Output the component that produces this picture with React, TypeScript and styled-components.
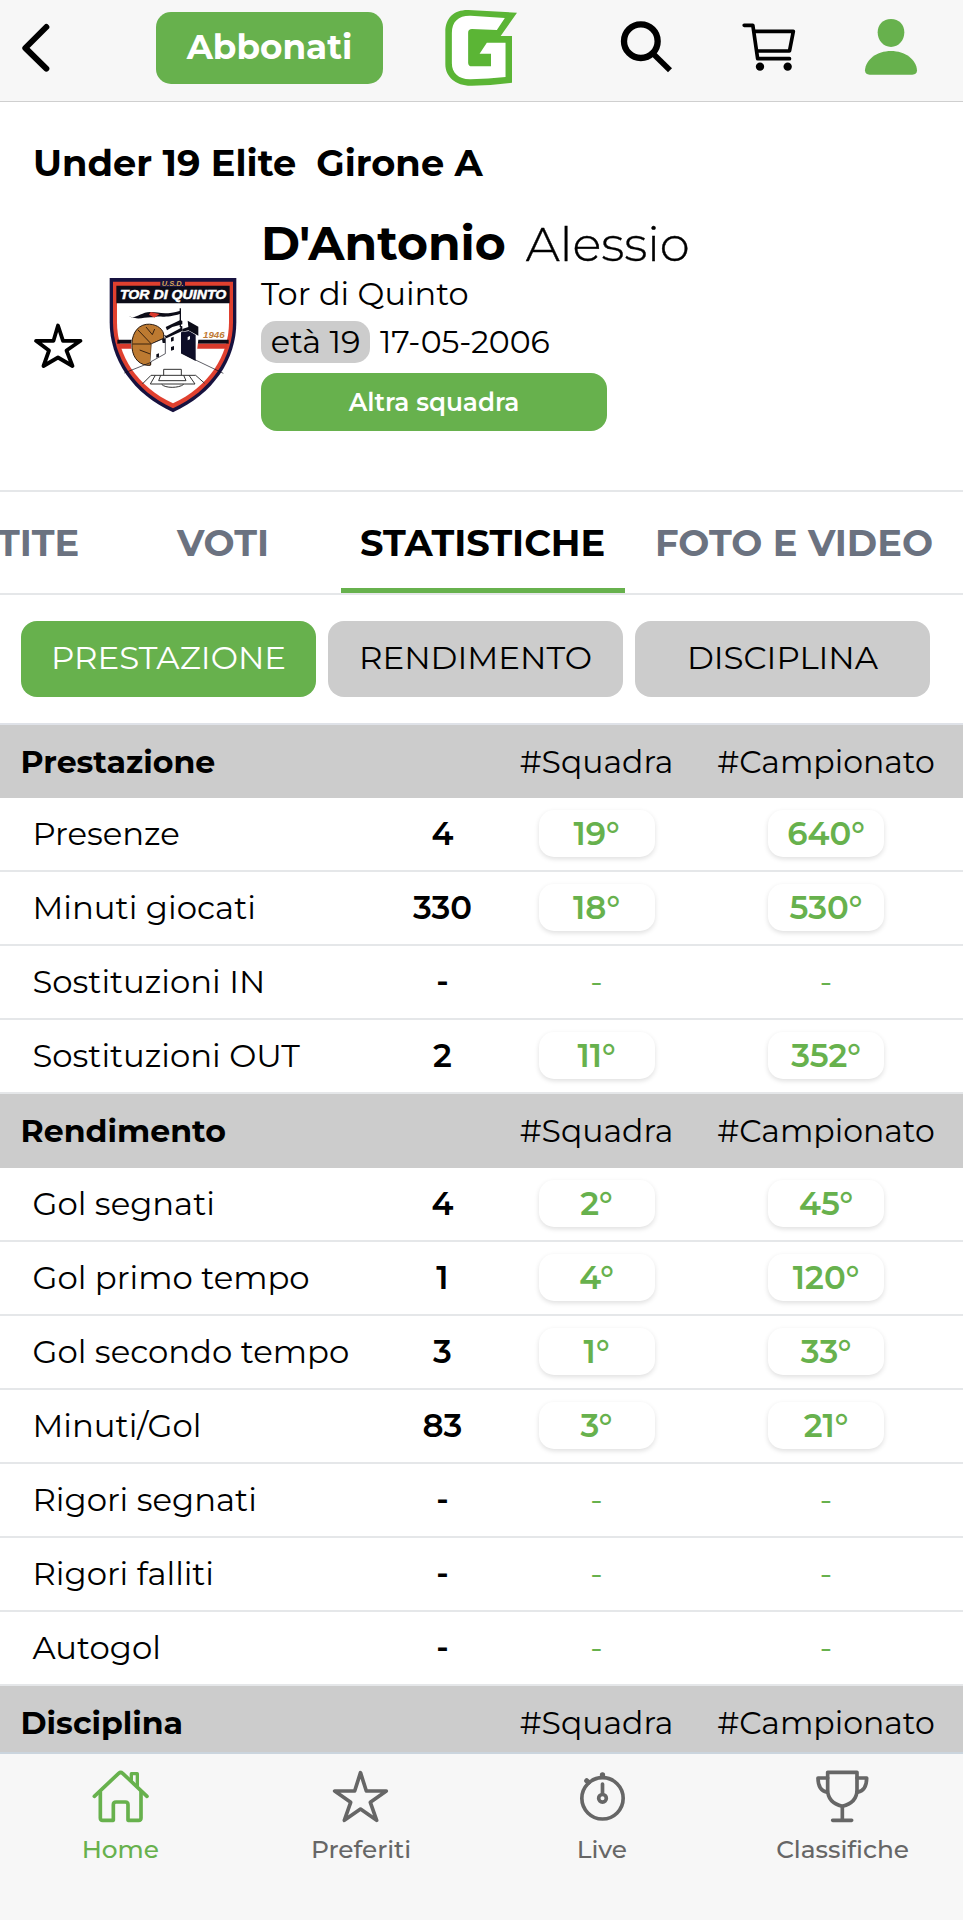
import React from 'react';
import styled, { createGlobalStyle } from 'styled-components';

const green = '#67b14d';
const grey = '#cccccc';
const line = '#e5e7e9';

const GlobalStyle = createGlobalStyle`
  * { box-sizing: border-box; }
  body {
    margin: 0;
    background: #fff;
    color: #000;
    font-family: Montserrat, Inter, "Open Sans", sans-serif;
  }
  button { font-family: inherit; border: 0; padding: 0; color: inherit; }
  svg { display: block; flex: none; }
`;

const Screen = styled.div`
  width: 963px;
  height: 1920px;
  overflow: hidden;
  display: flex;
  flex-direction: column;
`;

const Label = styled.span<{ $size?: number; $weight?: number }>`
  display: inline-block;
  white-space: nowrap;
  font-size: ${p => p.$size ?? 32.3}px;
  font-weight: ${p => p.$weight ?? 400};
`;

/* top bar */
const TopBar = styled.header`
  display: flex;
  align-items: flex-start;
  flex: none;
  height: 102px;
  padding-left: 18px;
  background: #f7f7f7;
  border-bottom: 1px solid #cfcfcf;
`;
const BarIcon = styled.svg<{ $left?: number; $top: number }>`
  margin-left: ${p => p.$left ?? 0}px;
  margin-top: ${p => p.$top}px;
`;
const SubscribeButton = styled.button`
  width: 227px;
  height: 72px;
  margin: 12px 0 0 102px;
  border-radius: 15px;
  background: ${green};
  color: #fff;
  line-height: 71px;
`;

/* player card */
const Main = styled.main`
  flex: 1;
  min-height: 0;
  overflow: hidden;
`;
const Player = styled.section`
  height: 390px;
  padding: 40px 0 0 33px;
  border-bottom: 2px solid ${line};
`;
const League = styled.h1`
  display: flex;
  gap: 20px;
  margin: 0 0 32px;
  height: 42px;
  line-height: 42px;
  font-size: inherit;
`;
const PlayerRow = styled.div`
  display: flex;
  align-items: flex-start;
`;
const StarIcon = styled.svg`
  margin-top: 104px;
`;
const Crest = styled.svg`
  margin: 61px 0 0 26px;
`;
const Info = styled.div`
  display: flex;
  flex-direction: column;
  align-items: flex-start;
  margin-left: 24px;
`;
const PlayerName = styled.h2`
  display: flex;
  gap: 20px;
  margin: 0;
  height: 56px;
  line-height: 55px;
`;
const FirstName = styled(Label)`
  -webkit-text-stroke: 0.4px currentColor;
`;
const Club = styled.div`
  margin-top: 1px;
  height: 42px;
  line-height: 42px;
`;
const Birth = styled.div`
  display: flex;
  margin-top: 6px;
  gap: 10px;
  line-height: 42px;
`;
const AgePill = styled.div`
  width: 109px;
  height: 42px;
  border-radius: 15px;
  background: ${grey};
  text-align: center;
`;
const TeamButton = styled.button`
  width: 346px;
  height: 58px;
  margin-top: 10px;
  border-radius: 16px;
  background: ${green};
  color: #fff;
  line-height: 58px;
`;

/* tabs */
const Tabs = styled.nav`
  display: flex;
  height: 103px;
  border-bottom: 2px solid ${line};
`;
const Tab = styled.a<{ $active?: boolean; $width: number; $offset: number }>`
  flex: none;
  width: ${p => p.$width}px;
  height: 101px;
  line-height: 102px;
  color: ${p => (p.$active ? '#000' : '#6b7280')};
  box-shadow: ${p => (p.$active ? `inset 0 -5px 0 ${green}` : 'none')};
  & > span { margin-left: ${p => p.$offset}px; }
`;
const Filters = styled.div`
  display: flex;
  gap: 12px;
  padding: 26px 33px 26px 21px;
`;
const Filter = styled.button<{ $active?: boolean }>`
  flex: 1;
  height: 76px;
  border-radius: 16px;
  line-height: 74px;
  background: ${p => (p.$active ? green : grey)};
  color: ${p => (p.$active ? '#fff' : '#000')};
`;

/* statistics table */
const Stats = styled.div`
  border-top: 2px solid #dfe2e8;
`;
const StatGrid = styled.div`
  display: grid;
  grid-template-columns: 400px 85px 223px 236px;
  align-items: center;
  justify-items: center;
  & > :first-child { justify-self: start; }
`;
const GroupHead = styled(StatGrid)<{ $height: number }>`
  height: ${p => p.$height}px;
  padding-bottom: ${p => p.$height - 73}px;
  background: ${grey};
  & > :first-child { margin-left: 20.5px; }
`;
const StatRow = styled(StatGrid)`
  height: 74px;
  padding-bottom: 2px;
  border-bottom: 2px solid ${line};
  & > :first-child { margin-left: 32.5px; }
`;
const Rank = styled.div<{ $empty: boolean }>`
  width: 116px;
  height: 47px;
  line-height: 47px;
  border-radius: 15px;
  text-align: center;
  color: ${green};
  box-shadow: ${p => (p.$empty ? 'none' : '0 2px 5px rgba(0, 0, 0, 0.13)')};
`;

/* bottom navigation */
const BottomNav = styled.nav`
  display: flex;
  flex: none;
  height: 168px;
  border-top: 2px solid #cbd5de;
  background: #f7f7f7;
`;
const NavItem = styled.a<{ $active?: boolean }>`
  flex: 1;
  display: flex;
  flex-direction: column;
  align-items: center;
  padding-top: 12px;
  color: ${p => (p.$active ? green : '#666')};
  line-height: 30px;
  & > span { margin-top: 8px; }
`;

type Stat = [name: string, value: string, team: string, league: string];

const performance: Stat[] = [
  ['Presenze', '4', '19°', '640°'],
  ['Minuti giocati', '330', '18°', '530°'],
  ['Sostituzioni IN', '-', '-', '-'],
  ['Sostituzioni OUT', '2', '11°', '352°'],
];
const scoring: Stat[] = [
  ['Gol segnati', '4', '2°', '45°'],
  ['Gol primo tempo', '1', '4°', '120°'],
  ['Gol secondo tempo', '3', '1°', '33°'],
  ['Minuti/Gol', '83', '3°', '21°'],
  ['Rigori segnati', '-', '-', '-'],
  ['Rigori falliti', '-', '-', '-'],
  ['Autogol', '-', '-', '-'],
];

function Head({ title, height = 74 }: { title: string; height?: number }) {
  return (
    <GroupHead $height={height}>
      <Label $size={31.6} $weight={700}>{title}</Label>
      <span />
      <Label $size={31.5}>#Squadra</Label>
      <Label $size={31.5}>#Campionato</Label>
    </GroupHead>
  );
}

function RankCell({ value }: { value: string }) {
  const empty = value === '-';
  return (
    <Rank $empty={empty}>
      <Label $weight={empty ? 400 : 600}>{value}</Label>
    </Rank>
  );
}

function Rows({ stats }: { stats: Stat[] }) {
  return (
    <>
      {stats.map(([name, value, team, league]) => (
        <StatRow key={name}>
          <Label>{name}</Label>
          <Label $weight={600}>{value}</Label>
          <RankCell value={team} />
          <RankCell value={league} />
        </StatRow>
      ))}
    </>
  );
}

function ClubCrest() {
  return (
    <Crest width="128" height="136" viewBox="26 34 384 408">
      <path d="M28 37H408V170C408 280 340 385 218 440C96 385 28 280 28 170Z" fill="#17123f" />
      <path d="M38 48H398V170C398 274 333 376 218 428C103 376 38 274 38 170Z" fill="#e0402f" />
      <path d="M50 62H386V170C386 268 326 364 218 413C110 364 50 268 50 170Z" fill="#fff" />
      <path d="M48 60H388V113H48Z" fill="#0c0c18" />
      <path d="M180 44H254V64H180Z" fill="#17123f" />
      <path d="M51 222H385V234H51Z" fill="#0c0c18" />
      <path d="M53 234H383L380 249H56Z" fill="#d63a2c" />
      <path d="M160 214L216 184L290 178V222V270L284 262L150 290Z" fill="#fff" />
      <circle cx="142" cy="237" r="50" fill="#fff" />
      <path d="M190 205C186 186 163 173 138 176C108 180 92 210 95 246C98 280 120 301 150 299L153 266L166 262L160 234L190 224Z" fill="#bd7a31" stroke="#2a1a10" strokeWidth="3" />
      <path d="M113 193L153 235H96M153 235L190 218M153 235L151 298M137 184L156 207L163 190M118 253L150 265" fill="none" stroke="#3a220f" strokeWidth="3" />
      <path d="M84 152C108 162 122 138 151 139C172 138 191 150 240 135V144C197 159 176 149 158 155C128 153 119 165 84 152Z" fill="#0c0c18" />
      <path d="M151 139L178 145L162 156L146 147Z" fill="#d9382c" />
      <path d="M198 190L240 166L294 184V222L286 290L242 264L150 290L154 234L198 216Z" fill="#fff" />
      <path d="M240 128V184" stroke="#0c0c18" strokeWidth="4" />
      <path d="M196 184L240 163L246 166V176L216 184L200 194ZM198 210L240 188V180L246 182V196L198 218L190 208Z" fill="#0c0c18" />
      <path d="M262 165L294 183V210L286 206L264 194L246 198V190L264 184Z" fill="#0c0c18" />
      <path d="M242 200L266 196L286 208V286L242 263Z" fill="#0e0e28" />
      <path d="M154 234L195 216V264L152 288" fill="none" stroke="#0c0c18" strokeWidth="2" />
      <path d="M185 221L195 218V232H187ZM212 216L220 213V225L212 228ZM212 244L221 241V252L212 255ZM168 266L176 263V273L168 276Z" fill="#0c0c18" />
      <path d="M262 214L269 211V221L262 224Z" fill="#fff" />
      <path d="M242 262L369 323M152 290L72 322" stroke="#0c0c18" strokeWidth="2" fill="none" />
      <g fill="none" stroke="#333" strokeWidth="3">
        <path d="M126 355L152 329H286L313 353M190 329V311H243V329M165 329L150 355H284L266 329M181 329L175 345H257L250 329" />
        <path d="M184 356C194 368 236 368 250 356" />
      </g>
      <text x="217" y="61" fontSize="20" fontWeight="700" fontStyle="italic" fill="#d9a85a" textAnchor="middle" textLength="66" lengthAdjust="spacingAndGlyphs" fontFamily="Liberation Sans, sans-serif">U.S.D.</text>
      <text x="59" y="101" fontSize="38" fontWeight="700" fontStyle="italic" fill="#fff" stroke="#fff" strokeWidth="1.5" textLength="319" lengthAdjust="spacingAndGlyphs" fontFamily="Liberation Sans, sans-serif">TOR DI QUINTO</text>
      <text x="308" y="216" fontSize="25" fontWeight="700" fontStyle="italic" fill="#c07a35" textLength="65" lengthAdjust="spacingAndGlyphs" fontFamily="Liberation Sans, sans-serif">1946</text>
    </Crest>
  );
}

export default function App() {
  return (
    <Screen>
      <GlobalStyle />
      <TopBar>
        <BarIcon $top={18} width="36" height="60" viewBox="54 54 108 180">
          <path d="M139 81L76 144L139 206" fill="none" stroke="#000" strokeWidth="18" strokeLinecap="round" strokeLinejoin="round" />
        </BarIcon>
        <SubscribeButton>
          <Label $size={34.2} $weight={700}>Abbonati</Label>
        </SubscribeButton>
        <BarIcon $left={58} $top={6} width="81" height="84" viewBox="63 18 243 252">
          <path d="M145 30L291 38L242 108H276V248Q213 256 156 257.500C109 259 76 232 76 193V95C76 54 102 29 145 30Z" fill="#5bb535" />
          <path d="M152 47L254.500 54L230.600 90L156 87Q144.400 87 144.400 98V188Q144.400 199 156 199H213V161H178.700L200.500 128H256.600V231Q205 237 152 238C116 239 95.600 219 95.600 190V99C95.600 64 116 46 152 47Z" fill="#fff" />
        </BarIcon>
        <BarIcon $left={94} $top={18} width="60" height="60" viewBox="588 54 180 180">
          <circle cx="662.500" cy="123.500" r="50.500" fill="none" stroke="#000" strokeWidth="19" />
          <path d="M698 160L750 211" stroke="#000" strokeWidth="17" />
        </BarIcon>
        <BarIcon $left={64} $top={18} width="58" height="60" viewBox="960 54 174 180">
          <g fill="none" stroke="#000" strokeWidth="11" strokeLinecap="round" strokeLinejoin="round">
            <path d="M972.500 76H998.500L1013 176H1108.500" />
            <path d="M1003 94H1120L1108.500 153H1011" />
          </g>
          <circle cx="1020" cy="200" r="12.500" />
          <circle cx="1103" cy="200" r="12.500" />
        </BarIcon>
        <BarIcon $left={63} $top={15} width="60" height="64" viewBox="1323 45 180 192">
          <path d="M1413 57C1437 57 1453 74 1453 97C1453 121 1436 141 1413 141C1390 141 1373 121 1373 97C1373 74 1389 57 1413 57Z" fill={green} />
          <path d="M1349 224Q1335 224 1335 211C1337 178 1371 153 1413 153C1455 153 1489 178 1491 211Q1491 224 1477 224Z" fill={green} />
        </BarIcon>
      </TopBar>

      <Main>
        <Player>
          <League>
            <Label $size={36.8} $weight={700}>Under 19 Elite</Label>
            <Label $size={36.8} $weight={700}>Girone A</Label>
          </League>
          <PlayerRow>
            <StarIcon width="50" height="52" viewBox="0 0 50 52">
              <path d="M25 5.500L30 20.800H47.500L33.500 30.500L39.500 46L25 37.500L10.500 46L16 30.500L3 20.800H20.500Z" fill="none" stroke="#000" strokeWidth="3.800" strokeLinejoin="round" />
            </StarIcon>
            <ClubCrest />
            <Info>
              <PlayerName>
                <Label $size={47.3} $weight={700}>D'Antonio</Label>
                <FirstName $size={48.2} $weight={300}>Alessio</FirstName>
              </PlayerName>
              <Club>
                <Label $size={32}>Tor di Quinto</Label>
              </Club>
              <Birth>
                <AgePill>
                  <Label $size={31.9}>età 19</Label>
                </AgePill>
                <Label $size={31.5}>17-05-2006</Label>
              </Birth>
              <TeamButton>
                <Label $size={24.8} $weight={600}>Altra squadra</Label>
              </TeamButton>
            </Info>
          </PlayerRow>
        </Player>

        <Tabs>
          <Tab $width={177} $offset={-3}><Label $size={36.8} $weight={700}>TITE</Label></Tab>
          <Tab $width={164} $offset={0}><Label $size={36.8} $weight={700}>VOTI</Label></Tab>
          <Tab $width={284} $offset={19} $active><Label $size={36.8} $weight={700}>STATISTICHE</Label></Tab>
          <Tab $width={338} $offset={30}><Label $size={36.8} $weight={700}>FOTO E VIDEO</Label></Tab>
        </Tabs>
        <Filters>
          <Filter $active><Label $size={32.5}>PRESTAZIONE</Label></Filter>
          <Filter><Label $size={32.5}>RENDIMENTO</Label></Filter>
          <Filter><Label $size={32.5}>DISCIPLINA</Label></Filter>
        </Filters>

        <Stats>
          <Head title="Prestazione" height={73} />
          <Rows stats={performance} />
          <Head title="Rendimento" />
          <Rows stats={scoring} />
          <Head title="Disciplina" />
        </Stats>
      </Main>

      <BottomNav>
        <NavItem $active>
          <svg width="60" height="60" viewBox="271 78 180 180" fill="none" stroke="currentColor" strokeWidth="11" strokeLinecap="round" strokeLinejoin="round">
            <path d="M284 169L357 100Q363 95 369 100L442 169" />
            <path d="M302 156V234Q302 241 309 241H341V194Q341 186 349 186H377Q385 186 385 194V241H417Q424 241 424 234V156" />
            <path d="M395 120V101H413V138" strokeWidth="10" />
          </svg>
          <Label $size={24.8} $weight={500}>Home</Label>
        </NavItem>
        <NavItem>
          <svg width="60" height="60" viewBox="993 78 180 180" fill="none" stroke="currentColor" strokeWidth="11" strokeLinejoin="round">
            <path d="M1081.500 98L1099 153H1159L1111 187L1130 241L1081.500 207L1033 241L1052 187L1004 153H1064Z" />
          </svg>
          <Label $size={24.8} $weight={500}>Preferiti</Label>
        </NavItem>
        <NavItem>
          <svg width="60" height="60" viewBox="273 78 180 180" fill="none" stroke="currentColor" strokeWidth="11" strokeLinecap="round">
            <circle cx="364.500" cy="175" r="62" />
            <circle cx="364.500" cy="175" r="11.500" />
            <path d="M364.500 132V160M364.500 104V111" />
            <circle cx="364.500" cy="105" r="8" fill="currentColor" stroke="none" />
            <path d="M317 122L322 127" strokeWidth="15" />
          </svg>
          <Label $size={24.8} $weight={500}>Live</Label>
        </NavItem>
        <NavItem>
          <svg width="60" height="60" viewBox="995 78 180 180" fill="none" stroke="currentColor" strokeWidth="11" strokeLinecap="round" strokeLinejoin="round">
            <path d="M1039 97H1127V150C1127 176 1110 192 1083 199C1056 192 1039 176 1039 150Z" />
            <path d="M1039 114H1010C1010 138 1020 153 1037 157M1127 114H1156C1156 138 1146 153 1129 157M1083 200V240M1054 241H1111" />
          </svg>
          <Label $size={24.8} $weight={500}>Classifiche</Label>
        </NavItem>
      </BottomNav>
    </Screen>
  );
}
